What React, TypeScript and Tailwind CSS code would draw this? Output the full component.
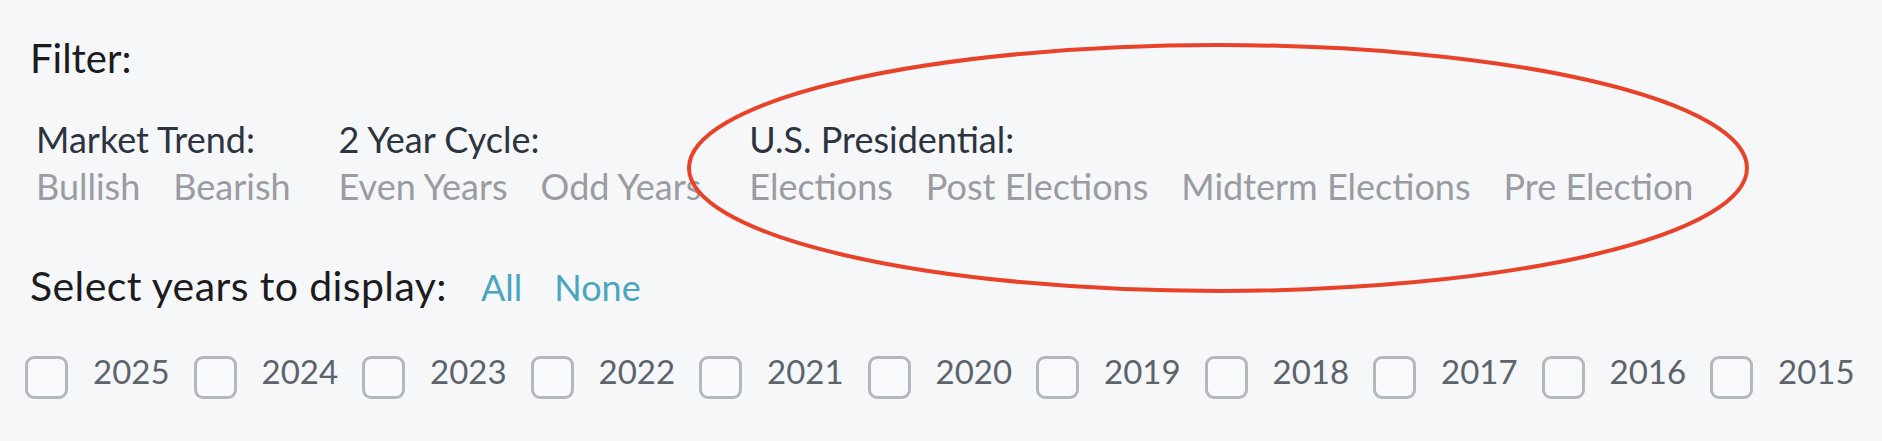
const groups = [
  { label: 'Market Trend:', options: ['Bullish', 'Bearish'] },
  { label: '2 Year Cycle:', options: ['Even Years', 'Odd Years'] },
  { label: 'U.S. Presidential:', options: ['Elections', 'Post Elections', 'Midterm Elections', 'Pre Election'] },
]

const years = [2025, 2024, 2023, 2022, 2021, 2020, 2019, 2018, 2017, 2016, 2015]

export default function App() {
  return (
    <div className="relative min-h-[441px] bg-[#f6f7f9] px-[30px] pt-[34px] font-['Lato','Liberation_Sans',sans-serif] overflow-hidden">
      {/* heading */}
      <div className="text-[40px] leading-[48px] text-[#1c1c1e]">Filter:</div>

      {/* filter groups */}
      <div className="mt-[34px] flex gap-[48px] pl-[6px]">
        {groups.map((g) => (
          <div key={g.label} className="flex flex-col">
            <div className="text-[36px] leading-[47px] text-[#2c3440]">{g.label}</div>
            <div className="flex gap-[33px] text-[36px] leading-[47px] text-[#9a9ca1]">
              {g.options.map((o) => (
                <span key={o} className="cursor-pointer">{o}</span>
              ))}
            </div>
          </div>
        ))}
      </div>

      {/* year selection */}
      <div className="mt-[52px] flex items-baseline leading-[48px]">
        <span className="text-[41px] tracking-[0.4px] text-[#1c1c1e]">Select years to display:</span>
        <span className="ml-[34px] text-[36px] text-[#4aa6bf]">All</span>
        <span className="ml-[32px] text-[36px] text-[#4aa6bf]">None</span>
      </div>

      <div className="mt-[44px] -ml-[5px] flex items-center gap-[25px]">
        {years.map((y) => (
          <label key={y} className="flex items-center gap-[25px]">
            <span className="block h-[43px] w-[43px] rounded-[9px] border-[3px] border-[#b3b8be] bg-[#f8f9fb]" />
            <span className="w-[75.5px] pb-[12px] text-[33px] leading-[32px] text-[#5c636b]">{y}</span>
          </label>
        ))}
      </div>

      {/* annotation */}
      <svg className="pointer-events-none absolute left-0 top-0" width="1882" height="441">
        <ellipse cx="1218" cy="168" rx="529" ry="123" fill="none" stroke="#e8432a" strokeWidth="4" />
      </svg>
    </div>
  )
}
